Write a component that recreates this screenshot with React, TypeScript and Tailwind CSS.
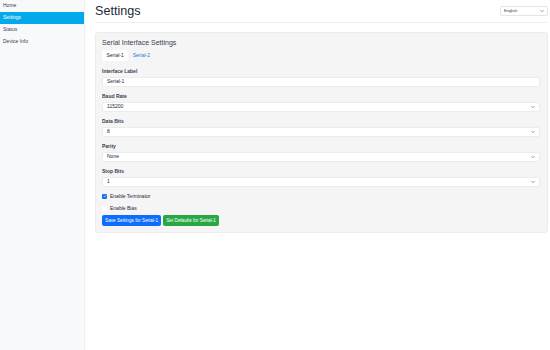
import React, { useState } from 'react';

const navItems = ['Home', 'Settings', 'Status', 'Device Info'];

const Chevron = () => (
  <svg width="4" height="4" viewBox="0 0 16 16" className="text-gray-500">
    <path d="M2 5l6 6 6-6" fill="none" stroke="currentColor" strokeWidth="2.5" strokeLinecap="round" strokeLinejoin="round" />
  </svg>
);

const Field: React.FC<{ label: string; value: string; select?: boolean }> = ({ label, value, select }) => (
  <div className="flex flex-col">
    <label className="text-[5px] font-semibold text-gray-700 leading-[6px] mb-[3px]">{label}</label>
    <div className="h-[10px] bg-white border border-[#ececec] rounded-[2px] flex items-center justify-between pl-[4px] pr-[4px]">
      <span className="text-[5px] text-gray-800">{value}</span>
      {select && <Chevron />}
    </div>
  </div>
);

export default function App() {
  const [tab, setTab] = useState(1);

  return (
    <div className="flex w-[550px] h-[350px] bg-white overflow-hidden" style={{ fontFamily: '"Liberation Sans", Arial, sans-serif' }}>
      <aside className="w-[85px] shrink-0 bg-[#f8f9fa] border-r border-[#eeeeee]">
        {navItems.map(item => (
          <div
            key={item}
            className={`h-[12px] flex items-center pl-[3px] text-[5px] ${item === 'Settings' ? 'bg-[#03a9e8] text-white' : 'text-gray-700'}`}
          >
            {item}
          </div>
        ))}
      </aside>

      <main className="flex-1 pl-[10px] pr-[2px]">
        <div className="flex items-center justify-between h-[23px] border-b border-[#eeeeee]">
          <h1 className="text-[12.6px] text-gray-800 leading-none">Settings</h1>
          <div className="w-[48px] h-[10px] bg-white border border-[#e5e5e5] rounded-[2px] flex items-center justify-between px-[3px]">
            <span className="text-[4px] text-gray-700">English</span>
            <Chevron />
          </div>
        </div>

        <section className="mt-[9px] bg-[#f5f5f5] border border-[#ececec] rounded-[3px] px-[6px] pt-[5px] pb-[6px]">
          <h2 className="text-[7px] text-gray-700 leading-[9px]">Serial Interface Settings</h2>

          <div className="flex mt-[3px]">
            {[1, 2].map(n => (
              <button
                key={n}
                onClick={() => setTab(n)}
                className={`h-[11px] px-[4.5px] text-[5px] rounded-t-[2px] ${tab === n ? 'bg-white text-gray-800' : 'text-[#1a73e8]'}`}
              >
                Serial-{n}
              </button>
            ))}
          </div>

          <div className="flex flex-col gap-[6px] mt-[7px] pr-[1px]">
            <Field label="Interface Label" value={`Serial-${tab}`} />
            <Field label="Baud Rate" value="115200" select />
            <Field label="Data Bits" value="8" select />
            <Field label="Parity" value="None" select />
            <Field label="Stop Bits" value="1" select />
          </div>

          <div className="flex flex-col gap-[6px] mt-[6px]">
            <label className="flex items-center gap-[3px] text-[5px] text-gray-800 leading-[6px]">
              <span className="w-[5px] h-[5px] rounded-[1px] bg-[#1a73e8] flex items-center justify-center">
                <svg width="4" height="4" viewBox="0 0 10 10">
                  <path d="M2 5l2 2 4-4" fill="none" stroke="white" strokeWidth="1.6" />
                </svg>
              </span>
              Enable Terminator
            </label>
            <label className="flex items-center gap-[3px] text-[5px] text-gray-800 leading-[6px]">
              <span className="w-[5px] h-[5px] rounded-[1px] bg-white" />
              Enable Bias
            </label>
          </div>

          <div className="flex gap-[2px] mt-[4px]">
            <button className="h-[11px] px-[3px] bg-[#0d6efd] text-white text-[4.7px] rounded-[2px]">
              Save Settings for Serial-{tab}
            </button>
            <button className="h-[11px] px-[3px] bg-[#28a745] text-white text-[4.7px] rounded-[2px]">
              Set Defaults for Serial-{tab}
            </button>
          </div>
        </section>
      </main>
    </div>
  );
}
